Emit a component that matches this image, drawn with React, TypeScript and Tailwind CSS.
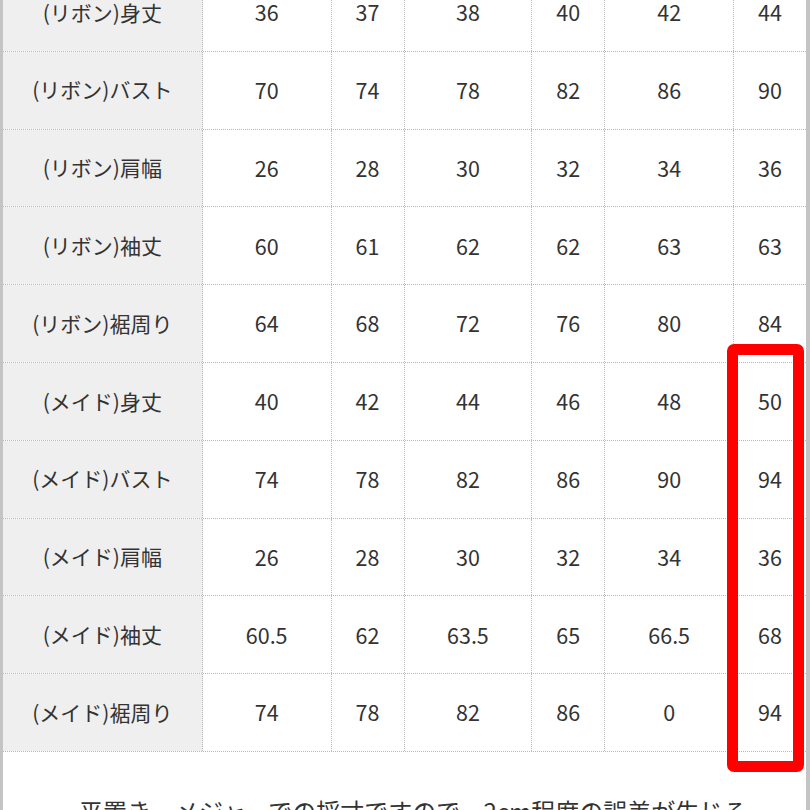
const COLS = ["w-[129px]", "w-[73px]", "w-[128px]", "w-[73px]", "w-[129px]", "w-[72px]"];

const ROWS: { label: string; values: string[] }[] = [
  { label: "(リボン)身丈", values: ["36", "37", "38", "40", "42", "44"] },
  { label: "(リボン)バスト", values: ["70", "74", "78", "82", "86", "90"] },
  { label: "(リボン)肩幅", values: ["26", "28", "30", "32", "34", "36"] },
  { label: "(リボン)袖丈", values: ["60", "61", "62", "62", "63", "63"] },
  { label: "(リボン)裾周り", values: ["64", "68", "72", "76", "80", "84"] },
  { label: "(メイド)身丈", values: ["40", "42", "44", "46", "48", "50"] },
  { label: "(メイド)バスト", values: ["74", "78", "82", "86", "90", "94"] },
  { label: "(メイド)肩幅", values: ["26", "28", "30", "32", "34", "36"] },
  { label: "(メイド)袖丈", values: ["60.5", "62", "63.5", "65", "66.5", "68"] },
  { label: "(メイド)裾周り", values: ["74", "78", "82", "86", "0", "94"] },
];

export default function App() {
  return (
    <div
      className="relative h-[810px] w-[810px] overflow-hidden bg-white text-[#333]"
      style={{ fontFamily: '"Noto Sans CJK JP", "Noto Sans", sans-serif' }}
    >
      <div className="flex h-full border-l-[3px] border-r-[4px] border-[#c4c4c4]">
        <div className="flex w-full flex-col">
          <div className="-mt-[26px] flex flex-col">
            {ROWS.map((r) => (
              <div key={r.label} className="flex h-[77.8px] border-b border-dotted border-[#b8b8b8]">
                <div className="flex w-[200px] items-center justify-center border-r border-dotted border-[#b8b8b8] bg-[#efefef] text-[21px]">
                  {r.label}
                </div>
                {r.values.map((v, i) => (
                  <div
                    key={i}
                    className={`flex items-center justify-center text-[21.5px] ${COLS[i]} ${
                      i < 5 ? "border-r border-dotted border-[#b8b8b8]" : ""
                    }`}
                  >
                    {v}
                  </div>
                ))}
              </div>
            ))}
          </div>
          <p className="mt-[42px] whitespace-nowrap pl-[52px] text-[24px] leading-[1.4]">
            ・平置き・メジャーでの採寸ですので、2cm程度の誤差が生じる
          </p>
        </div>
      </div>
      <div className="absolute left-[727px] top-[344px] h-[428px] w-[77px] rounded-[7px] border-[11px] border-[#ff0000]" />
    </div>
  );
}
